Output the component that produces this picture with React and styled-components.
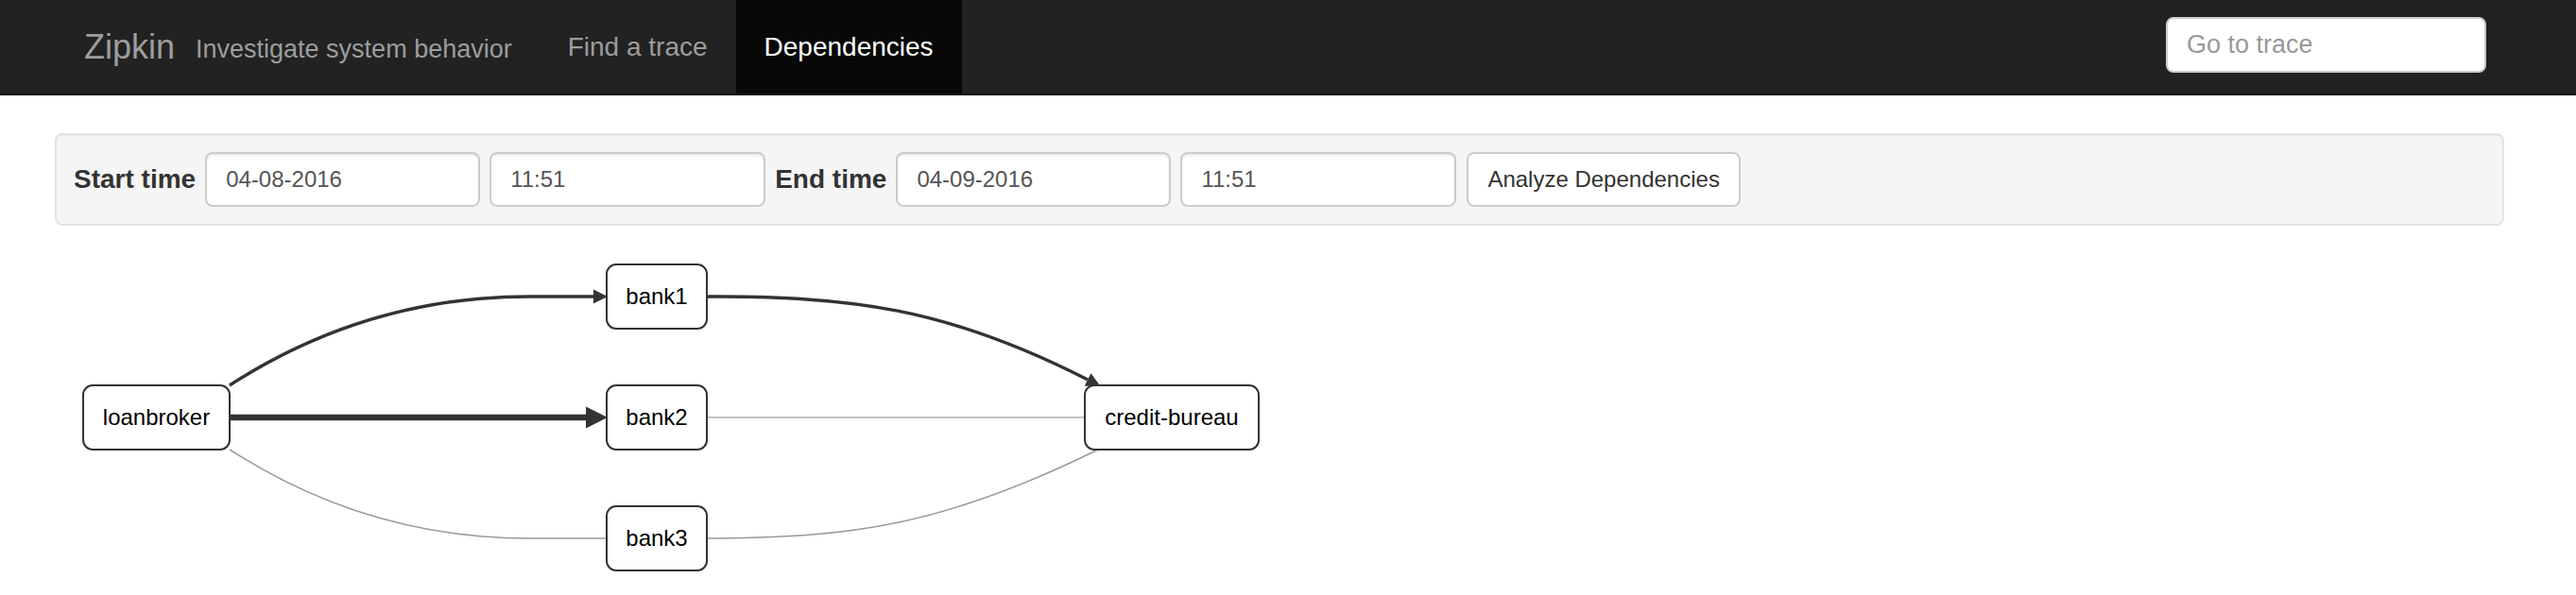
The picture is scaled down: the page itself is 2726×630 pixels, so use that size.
import React from 'react';
import styled, { createGlobalStyle } from 'styled-components';

const GlobalStyle = createGlobalStyle`
  body {
    margin: 0;
    background: #fff;
    font-family: 'Liberation Sans', Arial, Helvetica, sans-serif;
    color: #333;
  }
`;

const Navbar = styled.nav`
  display: flex;
  align-items: center;
  height: 99px;
  background: #222;
  border-bottom: 2px solid #080808;
`;

const Brand = styled.a`
  margin-left: 89px;
  font-size: 36px;
  color: #9d9d9d;
  text-decoration: none;
`;

const Tagline = styled.span`
  margin-left: 22px;
  padding-top: 6px;
  font-size: 27px;
  color: #9d9d9d;
`;

const NavList = styled.ul`
  display: flex;
  align-self: stretch;
  margin: 0 0 0 29px;
  padding: 0;
  list-style: none;
`;

const NavItem = styled.li`
  display: flex;
  align-items: center;
  padding: 0 30px;
  font-size: 28px;
  color: ${p => (p.active ? '#fff' : '#9d9d9d')};
  background: ${p => (p.active ? '#080808' : 'transparent')};
`;

const TraceSearch = styled.input`
  align-self: flex-start;
  box-sizing: border-box;
  width: 339px;
  height: 59px;
  margin: 18px 95px 0 auto;
  padding: 0 20px;
  border: 2px solid #ccc;
  border-radius: 8px;
  font-family: inherit;
  font-size: 27px;
  color: #555;
  outline: none;
  &::placeholder {
    color: #999;
  }
`;

const Well = styled.form`
  display: flex;
  align-items: center;
  gap: 10px;
  margin: 40px 76px 0 58px;
  padding: 18px;
  background: #f5f5f5;
  border: 2px solid #e3e3e3;
  border-radius: 8px;
  box-shadow: inset 0 1px 1px rgba(0, 0, 0, 0.05);
`;

const Label = styled.label`
  font-size: 28px;
  font-weight: bold;
  color: #333;
  margin-right: ${p => p.gap || 0}px;
`;

const Field = styled.input`
  box-sizing: border-box;
  width: ${p => p.w || 292}px;
  height: 58px;
  padding: 0 20px;
  border: 2px solid #ccc;
  border-radius: 8px;
  background: #fff;
  font-family: inherit;
  font-size: 24px;
  color: #555;
  box-shadow: inset 0 2px 2px rgba(0, 0, 0, 0.075);
  outline: none;
`;

const Button = styled.button`
  box-sizing: border-box;
  height: 58px;
  margin-left: 1px;
  padding: 0 20px;
  border: 2px solid #ccc;
  border-radius: 8px;
  background: #fff;
  font-family: inherit;
  font-size: 24px;
  color: #333;
`;

const Graph = styled.svg`
  display: block;
  font-family: 'Liberation Sans', Arial, Helvetica, sans-serif;
`;

const nodes = [
  { id: 'loanbroker', x: 88, y: 408, w: 155 },
  { id: 'bank1', x: 642, y: 280, w: 106 },
  { id: 'bank2', x: 642, y: 408, w: 106 },
  { id: 'bank3', x: 642, y: 536, w: 106 },
  { id: 'credit-bureau', x: 1148, y: 408, w: 184 },
];

const edges = [
  { d: 'M243,476 C325,529 430,570 560,570 L642,570', stroke: '#999', width: 1.5 },
  { d: 'M748,442 L1148,442', stroke: '#c4c4c4', width: 2 },
  { d: 'M748,570 C900,570 1000,556 1162,476', stroke: '#999', width: 1.5 },
  { d: 'M243,408 C325,355 430,314 560,314 L628,314', stroke: '#333', width: 3.5, marker: 'url(#arrow)' },
  { d: 'M748,314 C900,314 1000,325 1151,402', stroke: '#333', width: 3.5, marker: 'url(#arrow)' },
  { d: 'M243,442 L620,442', stroke: '#333', width: 6.5, marker: 'url(#arrowBig)' },
];

function DependencyGraph() {
  return (
    <Graph width="1400" height="391" viewBox="0 239 1400 391">
      <defs>
        <marker id="arrow" viewBox="0 0 10 10" refX="0" refY="5" markerWidth="15" markerHeight="16" markerUnits="userSpaceOnUse" orient="auto">
          <path d="M0,0 L10,5 L0,10 z" fill="#333" />
        </marker>
        <marker id="arrowBig" viewBox="0 0 10 10" refX="0" refY="5" markerWidth="23" markerHeight="30" markerUnits="userSpaceOnUse" orient="auto">
          <path d="M0,0 L10,5 L0,10 z" fill="#333" />
        </marker>
      </defs>
      {edges.map((e, i) => (
        <path key={i} d={e.d} fill="none" stroke={e.stroke} strokeWidth={e.width} markerEnd={e.marker} />
      ))}
      {nodes.map(n => (
        <g key={n.id}>
          <rect x={n.x} y={n.y} width={n.w} height="68" rx="10" fill="#fff" stroke="#333" strokeWidth="2" />
          <text x={n.x + n.w / 2} y={n.y + 42} textAnchor="middle" fontSize="24" fill="#000">
            {n.id}
          </text>
        </g>
      ))}
    </Graph>
  );
}

export default function App() {
  return (
    <>
      <GlobalStyle />
      <Navbar>
        <Brand>Zipkin</Brand>
        <Tagline>Investigate system behavior</Tagline>
        <NavList>
          <NavItem>Find a trace</NavItem>
          <NavItem active>Dependencies</NavItem>
        </NavList>
        <TraceSearch placeholder="Go to trace" />
      </Navbar>
      <Well onSubmit={e => e.preventDefault()}>
        <Label>Start time</Label>
        <Field w={291} defaultValue="04-08-2016" />
        <Field defaultValue="11:51" />
        <Label>End time</Label>
        <Field w={291} defaultValue="04-09-2016" />
        <Field defaultValue="11:51" />
        <Button type="button">Analyze Dependencies</Button>
      </Well>
      <DependencyGraph />
    </>
  );
}
